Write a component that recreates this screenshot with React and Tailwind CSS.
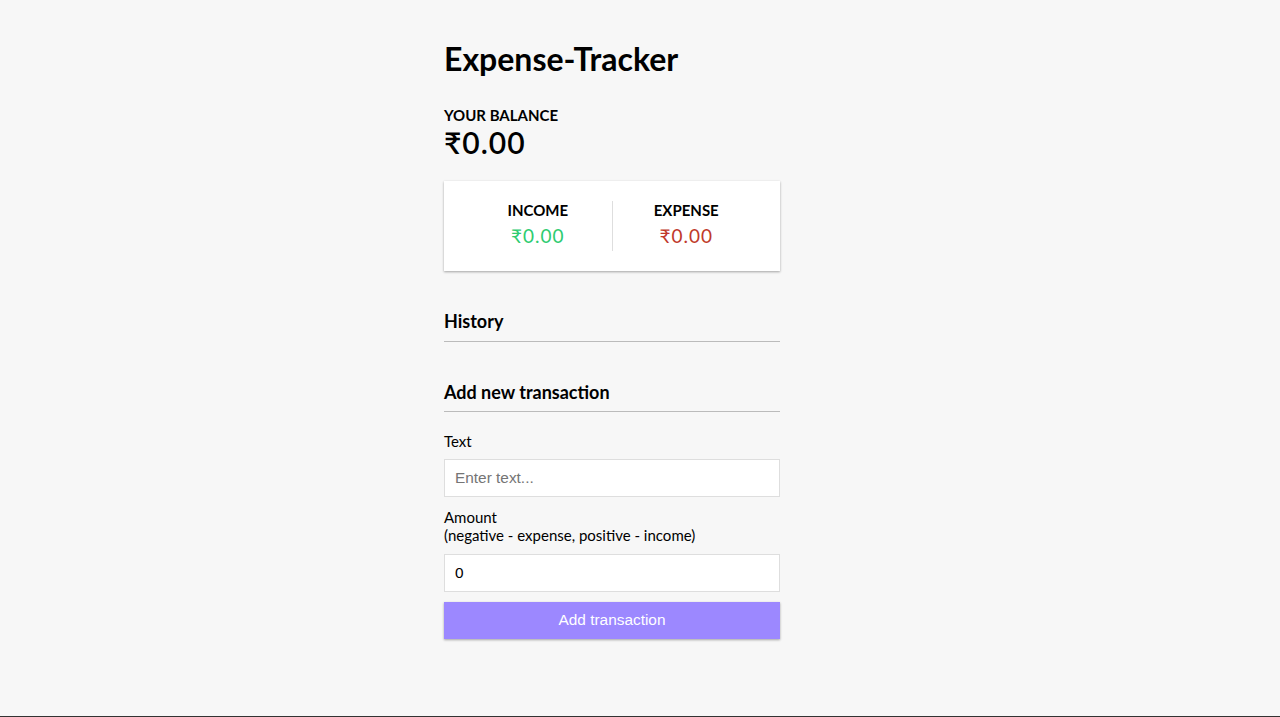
export default function App() {
  return (
    <div className="h-[717px] flex flex-col bg-[#f7f7f7] text-black" style={{ fontFamily: "Lato, 'Noto Sans', sans-serif" }}>
      <div className="flex-1 flex justify-center pr-[56px]">
        <div className="w-[336px] pt-[40px]">
          <h1 className="text-[32px] leading-[38px] font-bold">Expense-Tracker</h1>

          <div className="mt-[28px]">
            <h4 className="text-[15px] leading-[18px] font-bold">YOUR BALANCE</h4>
            <h2 className="text-[30px] leading-[36px] font-semibold tracking-[1px]">₹0.00</h2>
          </div>

          <div className="mt-[21px] bg-white flex px-[20px] pt-[20px] pb-[20px] shadow-[0_1px_3px_rgba(0,0,0,0.12),0_1px_2px_rgba(0,0,0,0.24)]">
            <div className="flex-1 text-center border-r border-[#dedede]">
              <h4 className="text-[15px] leading-[18px] font-bold">INCOME</h4>
              <p className="text-[19px] leading-[23px] mt-[5px] mb-[4px] tracking-[1px] text-[#2ecc71]">₹0.00</p>
            </div>
            <div className="flex-1 text-center">
              <h4 className="text-[15px] leading-[18px] font-bold">EXPENSE</h4>
              <p className="text-[19px] leading-[23px] mt-[5px] mb-[4px] tracking-[1px] text-[#c0392b]">₹0.00</p>
            </div>
          </div>

          <h3 className="mt-[39px] text-[18px] leading-[22px] font-bold pb-[9px] border-b border-[#bbbbbb]">History</h3>
          <ul></ul>

          <h3 className="mt-[39px] text-[18px] leading-[22px] font-bold pb-[8px] border-b border-[#bbbbbb]">Add new transaction</h3>

          <form onSubmit={(e) => e.preventDefault()}>
            <div className="mt-[20px]">
              <label className="block text-[15px] leading-[18px]">Text</label>
              <input
                type="text"
                placeholder="Enter text..."
                className="block mt-[9px] w-full h-[38px] border border-[#dedede] bg-white px-[10px] text-[15.4px] text-black placeholder:text-[#757575] outline-none"
                style={{ fontFamily: "'Liberation Sans', Arial, sans-serif" }}
              />
            </div>
            <div className="mt-[11px]">
              <label className="block text-[15px] leading-[18px]">
                Amount <br />
                (negative - expense, positive - income)
              </label>
              <input
                type="number"
                defaultValue="0"
                className="block mt-[10px] w-full h-[38px] border border-[#dedede] bg-white px-[10px] text-[15.4px] text-black outline-none"
                style={{ fontFamily: "'Liberation Sans', Arial, sans-serif" }}
              />
            </div>
            <button
              type="submit"
              className="block mt-[10px] w-full h-[37px] pb-[2px] bg-[#9c88ff] text-white text-[15.4px] shadow-[0_1px_3px_rgba(0,0,0,0.12),0_1px_2px_rgba(0,0,0,0.24)]"
              style={{ fontFamily: "'Liberation Sans', Arial, sans-serif" }}
            >
              Add transaction
            </button>
          </form>
        </div>
      </div>
      <div className="h-[1px] bg-[#333333]"></div>
    </div>
  );
}
